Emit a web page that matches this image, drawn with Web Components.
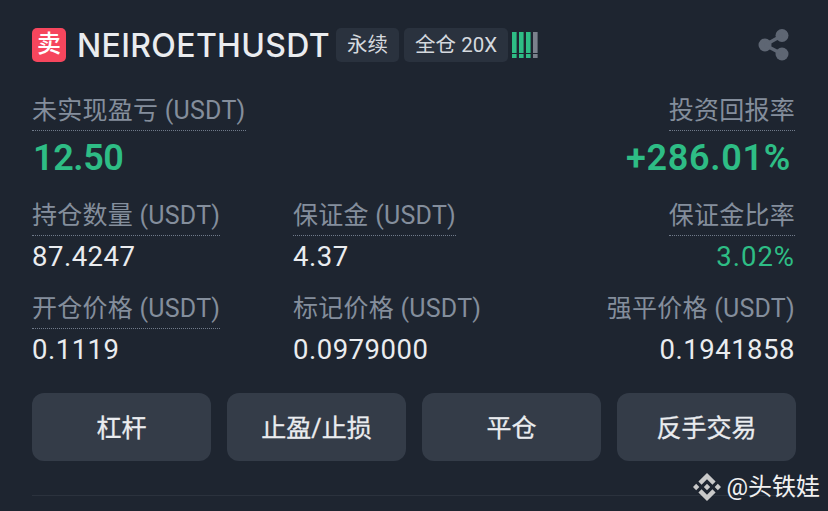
<!DOCTYPE html>
<html>
<head>
<meta charset="utf-8">
<style>
html, body { margin: 0; height: 100%; background: #1e2530; }
body { width: 828px; height: 511px; overflow: hidden; position: relative; font-family: Roboto, "Noto Sans CJK SC", sans-serif; }
</style>
</head>
<body>
<position-card>
    <position-header slot="header" symbol="NEIROETHUSDT"></position-header>
    <div slot="pnl" style="display:flex;justify-content:space-between">
        <stat-cell label="未实现盈亏 (USDT)" value="12.50" big green></stat-cell>
        <stat-cell label="投资回报率" value="+286.01%" big green right></stat-cell>
    </div>
    <stat-cell slot="stats" label="持仓数量 (USDT)" value="87.4247"></stat-cell>
    <stat-cell slot="stats" label="保证金 (USDT)" value="4.37"></stat-cell>
    <stat-cell slot="stats" label="保证金比率" value="3.02%" green right></stat-cell>
    <stat-cell slot="stats" label="开仓价格 (USDT)" value="0.1119"></stat-cell>
    <stat-cell slot="stats" label="标记价格 (USDT)" value="0.0979000" plain></stat-cell>
    <stat-cell slot="stats" label="强平价格 (USDT)" value="0.1941858" plain right></stat-cell>
    <action-button slot="actions">杠杆</action-button>
    <action-button slot="actions">止盈/止损</action-button>
    <action-button slot="actions">平仓</action-button>
    <action-button slot="actions">反手交易</action-button>
</position-card>
<author-mark>@头铁娃</author-mark>

<script>
class PositionCard extends HTMLElement {
    constructor() {
        super();
        this.attachShadow({ mode: 'open' });
        this.shadowRoot.innerHTML = `<style>
        :host { display: block; padding: 28px 32px 0; box-sizing: border-box; height: 511px; }
        .pnl { margin-top: 33px; }
        .stats { display: grid; grid-template-columns: 261px 1fr auto; row-gap: 15px; margin-top: 15px; }
        .actions { display: grid; grid-template-columns: repeat(4, 179px); column-gap: 16px; margin-top: 22px; }
        hr { border: 0; border-top: 1px solid #2b323d; margin: 34px 0 0; }
        </style>
        <slot name="header"></slot>
        <div class="pnl"><slot name="pnl"></slot></div>
        <div class="stats"><slot name="stats"></slot></div>
        <div class="actions"><slot name="actions"></slot></div>
        <hr>`;
    }
}

class PositionHeader extends HTMLElement {
    constructor() {
        super();
        this.attachShadow({ mode: 'open' });
        const symbol = this.getAttribute('symbol');
        this.shadowRoot.innerHTML = `<style>
        :host { display: flex; align-items: center; height: 34px; }
        .side { width: 34px; height: 34px; border-radius: 5px; background: #f6465d; color: #fff; font-size: 24px; font-weight: 500; line-height: 33px; text-align: center; }
        .symbol { margin-left: 11px; font-size: 32px; font-weight: 500; color: #eaecef; letter-spacing: 0.35px; font-family: Inter, Roboto, sans-serif; }
        .tag { height: 34px; line-height: 34px; box-sizing: border-box; padding: 0 11px; border-radius: 5px; background: #2a323e; color: #d5d9de; font-size: 20.5px; }
        .tag + .tag { margin-left: 5px; }
        .symbol + .tag { margin-left: 6px; }
        .bars { margin-left: 4px; }
        .share { margin-left: auto; margin-right: 6px; }
        </style>
        <span class="side">卖</span>
        <span class="symbol">${symbol}</span>
        <span class="tag">永续</span>
        <span class="tag">全仓 20X</span>
        <svg class="bars" width="27" height="26" viewBox="0 0 27 26">
            <g fill="#2ebd85">
                <rect x="0" y="0" width="4.6" height="21"/><rect x="0" y="22" width="4.6" height="4"/>
                <rect x="7" y="0" width="4.6" height="21"/><rect x="7" y="22" width="4.6" height="4"/>
                <rect x="14" y="0" width="4.6" height="21"/><rect x="14" y="22" width="4.6" height="4"/>
            </g>
            <g fill="#7b818c"><rect x="21" y="0" width="4.6" height="21"/><rect x="21" y="22" width="4.6" height="4"/></g>
        </svg>
        <svg class="share" width="32" height="34" viewBox="0 0 32 34" fill="#5e6673">
            <circle cx="24" cy="7.5" r="6.5"/><circle cx="7" cy="17" r="6.5"/><circle cx="24" cy="26" r="6.5"/>
            <path d="M7 17 24 7.5M7 17 24 26" stroke="#5e6673" stroke-width="3.5"/>
        </svg>`;
    }
}

class StatCell extends HTMLElement {
    constructor() {
        super();
        this.attachShadow({ mode: 'open' });
        this.shadowRoot.innerHTML = `<style>
        :host { display: flex; flex-direction: column; align-items: flex-start; }
        :host([right]) { align-items: flex-end; }
        .label { font-size: 25px; letter-spacing: 0.25px; line-height: 32px; height: 35px; color: #848e9c; border-bottom: 1px dotted #707a8a; }
        :host([plain]) .label { border-bottom-color: transparent; }
        :host([right]) .label { margin-right: 1px; }
        .value { font-size: 27.5px; line-height: 42px; color: #eaecef; letter-spacing: 0.5px; }
        :host([right]) .value { margin-right: 1px; }
        :host([green]) .value { color: #2ebd85; letter-spacing: 1px; }
        :host([big]) .value { font-size: 36px; line-height: 54px; font-weight: 600; letter-spacing: -0.4px; margin-left: 1px; }
        :host([big][right]) .value { margin-right: 5px; letter-spacing: 0.7px; }
        </style>
        <span class="label"></span>
        <span class="value"></span>`;
        this.shadowRoot.querySelector('.label').textContent = this.getAttribute('label');
        this.shadowRoot.querySelector('.value').textContent = this.getAttribute('value');
    }
}

class ActionButton extends HTMLElement {
    constructor() {
        super();
        this.attachShadow({ mode: 'open' });
        this.shadowRoot.innerHTML = `<style>
        :host { display: flex; align-items: center; justify-content: center; box-sizing: border-box; height: 68px; padding-bottom: 3px; border-radius: 12px; background: #343c48; color: #eaecef; font-size: 25px; font-weight: 400; -webkit-text-stroke: 0.3px #eaecef; }
        </style><slot></slot>`;
    }
}

class AuthorMark extends HTMLElement {
    constructor() {
        super();
        this.attachShadow({ mode: 'open' });
        this.shadowRoot.innerHTML = `<style>
        :host { position: absolute; right: 8px; top: 472px; display: flex; align-items: center; gap: 5px; color: #f0f0f0; font-size: 24px; line-height: 30px; }
        </style>
        <svg width="28" height="28" viewBox="0 0 126.61 126.61" fill="#c9c9c9">
            <path d="M38.73 53.2l24.59-24.58 24.6 24.6 14.3-14.31L63.32 0 24.42 38.9l14.31 14.3zM0 63.31l14.3-14.31 14.31 14.31-14.31 14.3zM38.73 73.41l24.59 24.59 24.6-24.6 14.31 14.29-38.9 38.91-38.91-38.88v-.03zM98 63.31l14.3-14.31 14.31 14.3-14.31 14.32zM77.83 63.3L63.32 48.78 52.6 59.51l-1.24 1.23-2.54 2.54 14.5 14.5 14.51-14.52z"/>
        </svg><slot></slot>`;
    }
}

customElements.define('position-card', PositionCard);
customElements.define('position-header', PositionHeader);
customElements.define('stat-cell', StatCell);
customElements.define('action-button', ActionButton);
customElements.define('author-mark', AuthorMark);
</script>
</body>
</html>
